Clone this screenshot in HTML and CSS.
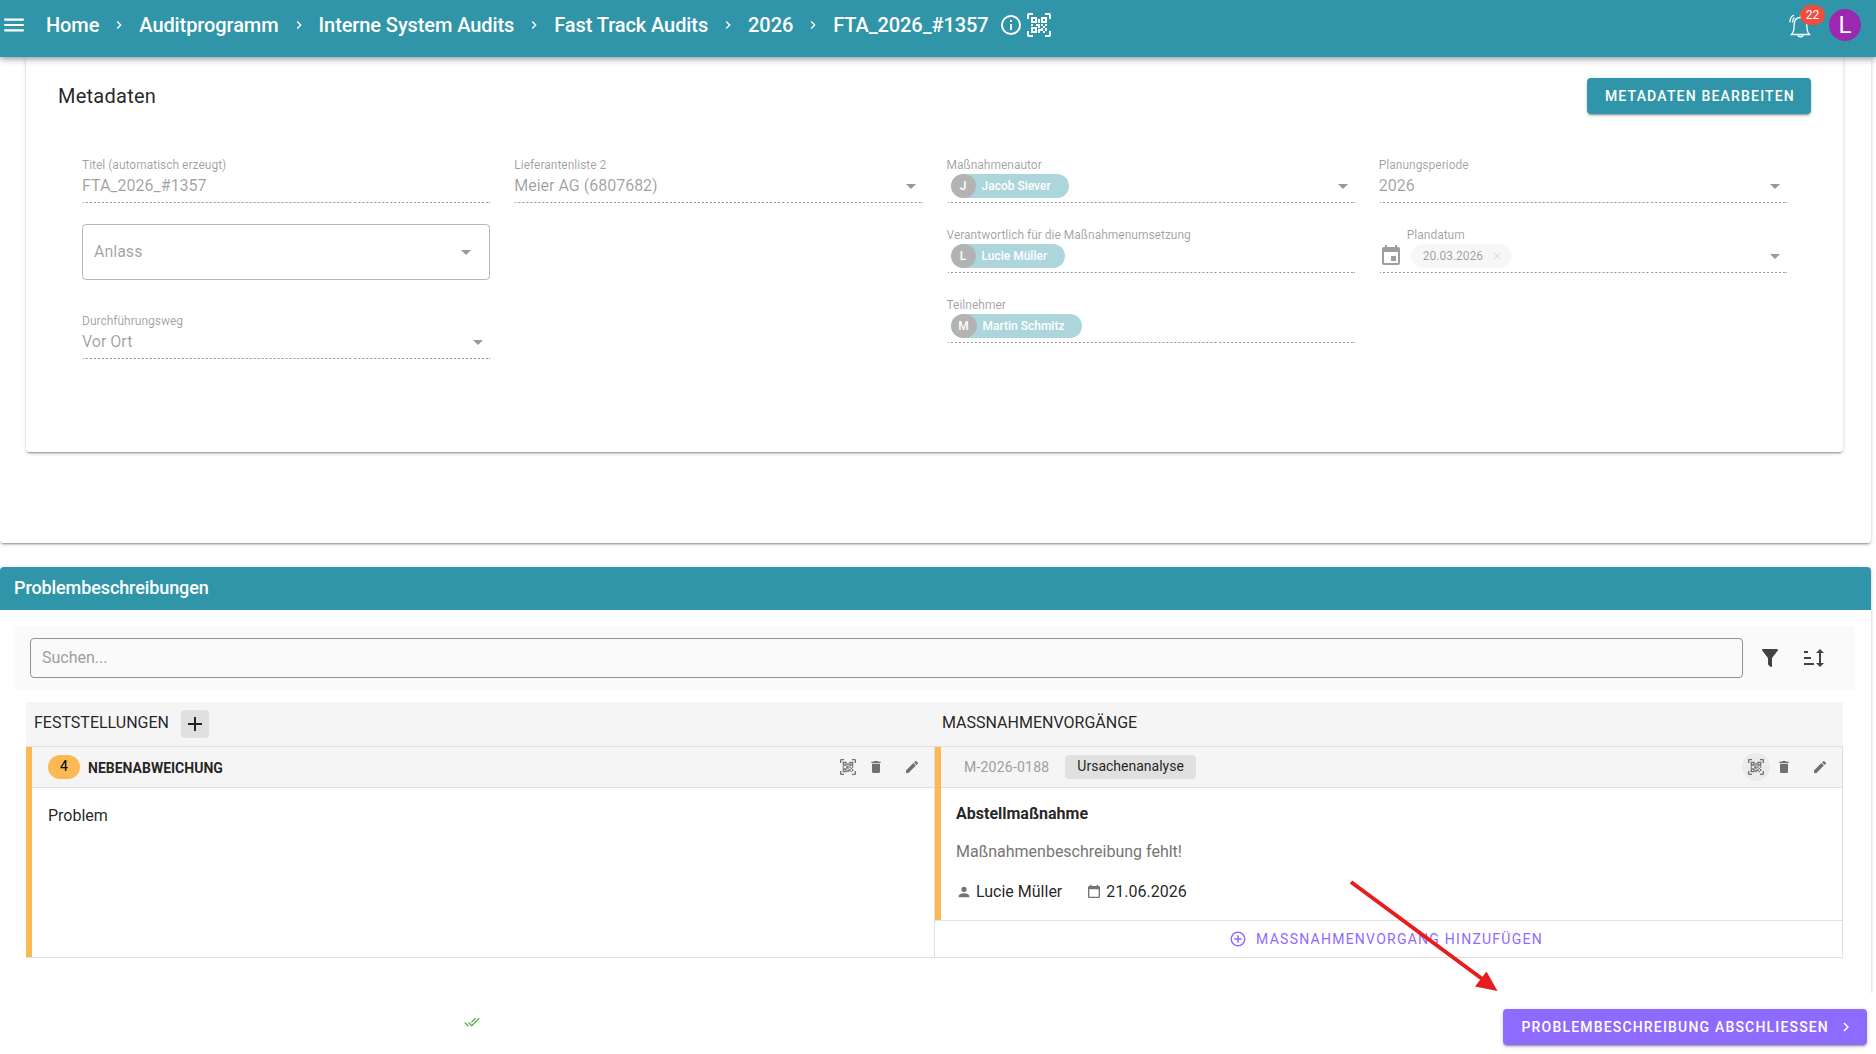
FILE: index.html
```html
<!DOCTYPE html>
<html lang="de">
<head>
    <meta charset="UTF-8">
    <meta name="viewport" content="width=device-width, initial-scale=1.0">
    <link rel="stylesheet" href="styles.css">
    <title>FTA_2026_#1357</title>
</head>
<body>
    <!-- shared icons -->
    <svg class="sprite">
        <symbol id="qr" viewBox="0 0 24 24"><path d="M4,4H10V10H4V4M20,4V10H14V4H20M14,15H16V13H14V11H16V13H18V11H20V13H18V15H20V18H18V20H16V18H13V20H11V16H14V15M16,15V18H18V15H16M4,20V14H10V20H4M6,6V8H8V6H6M16,6V8H18V6H16M6,16V18H8V16H6M4,11H6V13H4V11M9,11H13V15H11V13H9V11M11,6H13V10H11V6M2,2V6H0V2A2,2 0 0,1 2,0H6V2H2M22,0A2,2 0 0,1 24,2V6H22V2H18V0H22M2,18V22H6V24H2A2,2 0 0,1 0,22V18H2M22,22V18H24V22A2,2 0 0,1 22,24H18V22H22Z"/></symbol>
        <symbol id="delete" viewBox="0 0 24 24"><path d="M19,4H15.5L14.5,3H9.5L8.5,4H5V6H19M6,19A2,2 0 0,0 8,21H16A2,2 0 0,0 18,19V7H6V19Z"/></symbol>
        <symbol id="pencil" viewBox="0 0 24 24"><path d="M20.71,7.04C21.1,6.65 21.1,6 20.71,5.63L18.37,3.29C18,2.9 17.35,2.9 16.96,3.29L15.12,5.12L18.87,8.87M3,17.25V21H6.75L17.81,9.93L14.06,6.18L3,17.25Z"/></symbol>
        <symbol id="chevron" viewBox="0 0 24 24"><path d="M8.59,16.58L13.17,12L8.59,7.41L10,6L16,12L10,18L8.59,16.58Z"/></symbol>
    </svg>

    <header class="topbar">
        <svg class="menu" viewBox="0 0 24 24"><path d="M3,6H21V8H3V6M3,11H21V13H3V11M3,16H21V18H3V16Z"/></svg>
        <nav class="breadcrumb">
            <a>Home</a>
            <svg><use href="#chevron"/></svg>
            <a>Auditprogramm</a>
            <svg><use href="#chevron"/></svg>
            <a>Interne System Audits</a>
            <svg><use href="#chevron"/></svg>
            <a>Fast Track Audits</a>
            <svg><use href="#chevron"/></svg>
            <a>2026</a>
            <svg><use href="#chevron"/></svg>
            <a>FTA_2026_#1357</a>
        </nav>
        <svg class="info" viewBox="0 0 24 24"><path d="M11,9H13V7H11M12,20C7.59,20 4,16.41 4,12C4,7.59 7.59,4 12,4C16.41,4 20,7.59 20,12C20,16.41 16.41,20 12,20M12,2A10,10 0 0,0 2,12A10,10 0 0,0 12,22A10,10 0 0,0 22,12A10,10 0 0,0 12,2M11,17H13V11H11V17Z"/></svg>
        <svg class="qr-top"><use href="#qr"/></svg>
        <div class="bell">
            <svg viewBox="0 0 24 26">
                <path d="M3.5 22.5C6.5 19.5 6 17 6.2 12C6.5 7.500 8.500 5.500 12.500 5.500C16.500 5.500 18.500 7.500 18.800 12C19 17 18.500 19.500 21.500 22.500Z"/>
                <path d="M9.800 23C10.300 25.300 14.700 25.300 15.200 23M12.500 5.500V2.500M2 10.500C1.800 7 3 4.500 5.800 3M4.500 10.500C4.500 8 5.200 6.500 6.500 5.500"/>
            </svg>
            <span class="count">22</span>
        </div>
        <div class="avatar">L</div>
    </header>

    <main>
        <section class="panel panel-meta">
            <div class="card">
                <div class="card-head">
                    <h2>Metadaten</h2>
                    <button class="btn">Metadaten bearbeiten</button>
                </div>
                <div class="form">
                    <div class="col">
                        <div class="field">
                            <label>Titel (automatisch erzeugt)</label>
                            <div class="value">FTA_2026_#1357</div>
                        </div>
                        <div class="select">Anlass<i class="caret"></i></div>
                        <div class="field">
                            <label>Durchführungsweg</label>
                            <div class="value">Vor Ort<i class="caret"></i></div>
                        </div>
                    </div>
                    <div class="col">
                        <div class="field">
                            <label>Lieferantenliste 2</label>
                            <div class="value">Meier AG (6807682)<i class="caret"></i></div>
                        </div>
                    </div>
                    <div class="col">
                        <div class="field">
                            <label>Maßnahmenautor</label>
                            <div class="value value-chip"><span class="person"><b>J</b>Jacob Siever</span><i class="caret"></i></div>
                        </div>
                        <div class="field">
                            <label>Verantwortlich für die Maßnahmenumsetzung</label>
                            <div class="value value-chip"><span class="person"><b>L</b>Lucie Müller</span></div>
                        </div>
                        <div class="field">
                            <label>Teilnehmer</label>
                            <div class="value value-chip"><span class="person"><b class="wide">M</b>Martin Schmitz</span></div>
                        </div>
                    </div>
                    <div class="col">
                        <div class="field">
                            <label>Planungsperiode</label>
                            <div class="value">2026<i class="caret"></i></div>
                        </div>
                        <div class="field field-date">
                            <label>Plandatum</label>
                            <div class="value value-chip">
                                <svg class="event" viewBox="0 0 24 24"><path d="M19,19H5V8H19M16,1V3H8V1H6V3H5C3.890,3 3,3.890 3,5V19A2,2 0 0,0 5,21H19A2,2 0 0,0 21,19V5C21,3.890 20.100,3 19,3H18V1M17,12H12V17H17V12Z"/></svg>
                                <span class="date">20.03.2026<svg viewBox="0 0 8 8"><path d="M0.500 0.500L7.500 7.500M7.500 0.500L0.500 7.500"/></svg></span>
                                <i class="caret"></i>
                            </div>
                        </div>
                    </div>
                </div>
            </div>
        </section>

        <section class="panel panel-problems">
            <h3>Problembeschreibungen</h3>
            <div class="search">
                <input type="text" placeholder="Suchen...">
                <svg class="tool" viewBox="0 0 24 24"><path d="M14,12V19.880C14.040,20.180 13.940,20.500 13.710,20.710C13.320,21.100 12.690,21.100 12.300,20.710L10.290,18.700C10.060,18.470 9.960,18.160 10,17.870V12H9.970L4.210,4.620C3.870,4.190 3.950,3.560 4.380,3.220C4.570,3.080 4.780,3 5,3H19C19.220,3 19.430,3.080 19.620,3.220C20.050,3.560 20.130,4.190 19.790,4.620L14.030,12H14Z"/></svg>
                <svg class="tool" viewBox="0 0 24 24"><path d="M2 5H6V7H2ZM2 11H9V13H2ZM2 17H12V19H2ZM18 3L22 7H19V17H22L18 21L14 17H17V7H14Z"/></svg>
            </div>
            <div class="board">
                <div class="board-head">
                    <div>Feststellungen <button class="add"><svg viewBox="0 0 24 24"><path d="M19,13H13V19H11V13H5V11H11V5H13V11H19V13Z"/></svg></button></div>
                    <div>Massnahmenvorgänge</div>
                </div>
                <div class="board-row">
                    <article class="finding">
                        <div class="bar">
                            <span class="number">4</span>
                            <strong>NEBENABWEICHUNG</strong>
                            <div class="actions">
                                <span><svg><use href="#qr"/></svg></span>
                                <span><svg><use href="#delete"/></svg></span>
                                <span><svg><use href="#pencil"/></svg></span>
                            </div>
                        </div>
                        <p>Problem</p>
                    </article>
                    <div class="measures">
                        <article class="measure">
                            <div class="bar">
                                <span class="id">M-2026-0188</span>
                                <span class="tag">Ursachenanalyse</span>
                                <div class="actions">
                                    <span class="active"><svg><use href="#qr"/></svg></span>
                                    <span><svg><use href="#delete"/></svg></span>
                                    <span><svg><use href="#pencil"/></svg></span>
                                </div>
                            </div>
                            <h4>Abstellmaßnahme</h4>
                            <p class="muted">Maßnahmenbeschreibung fehlt!</p>
                            <div class="details">
                                <svg viewBox="0 0 24 24"><path d="M12,4A4,4 0 0,1 16,8A4,4 0 0,1 12,12A4,4 0 0,1 8,8A4,4 0 0,1 12,4M12,14C16.420,14 20,15.790 20,18V20H4V18C4,15.790 7.580,14 12,14Z"/></svg>
                                <span class="owner">Lucie Müller</span>
                                <svg viewBox="0 0 24 24"><path d="M19,19H5V8H19M16,1V3H8V1H6V3H5C3.890,3 3,3.890 3,5V19A2,2 0 0,0 5,21H19A2,2 0 0,0 21,19V5C21,3.890 20.100,3 19,3H18V1"/></svg>
                                <span>21.06.2026</span>
                            </div>
                        </article>
                        <button class="add-measure">
                            <svg viewBox="0 0 24 24"><path d="M12,20C7.590,20 4,16.410 4,12C4,7.590 7.590,4 12,4C16.410,4 20,7.590 20,12C20,16.410 16.410,20 12,20M12,2A10,10 0 0,0 2,12A10,10 0 0,0 12,22A10,10 0 0,0 22,12A10,10 0 0,0 12,2M13,7H11V11H7V13H11V17H13V13H17V11H13V7Z"/></svg>
                            Massnahmenvorgang hinzufügen
                        </button>
                    </div>
                </div>
            </div>
        </section>
    </main>

    <footer>
        <svg class="saved" viewBox="0 0 24 24"><path d="M0.410,13.410L6,19L7.410,17.580L1.830,12M22.240,5.580L11.660,16.170L7.500,12L6.070,13.410L11.660,19L23.660,7M18,7L16.590,5.580L10.240,11.930L11.660,13.340L18,7Z"/></svg>
        <button class="btn btn-finish">Problembeschreibung abschliessen <svg><use href="#chevron"/></svg></button>
    </footer>

    <!-- pointer to the finish button -->
    <svg class="pointer" viewBox="0 0 150 112"><path class="shaft" d="M2 2L136 101"/><path d="M148.500 111L126 106.500L137.500 91.500Z"/></svg>
</body>
</html>
```
FILE: styles.css
```css
* {
    margin: 0;
    padding: 0;
    box-sizing: border-box;
}
body {
    height: 1054px;
    display: flex;
    flex-direction: column;
    overflow: hidden;
    font-family: Roboto, "Liberation Sans", sans-serif;
    font-size: 16px;
    color: rgba(0, 0, 0, 0.87);
    background-color: #fff;
}
svg {
    fill: currentColor;
    flex-shrink: 0;
}
button {
    border: 0;
    font-family: inherit;
}
.sprite {
    display: none;
}

/* top bar */
.topbar {
    height: 57px;
    flex-shrink: 0;
    display: flex;
    align-items: center;
    padding: 0 15px 7px 1px;
    color: #fff;
    background-color: #3095a8;
    box-shadow: 0 2px 4px -1px rgba(0,0,0,.2), 0 4px 5px 0 rgba(0,0,0,.14), 0 1px 10px 0 rgba(0,0,0,.12);
    z-index: 2;
}
.menu {
    width: 26px;
    height: 26px;
}
.breadcrumb {
    display: flex;
    align-items: center;
    margin-left: 19px;
    font-size: 20px;
    font-weight: 500;
    letter-spacing: -0.09px;
    white-space: nowrap;
}
.breadcrumb svg {
    width: 16px;
    height: 16px;
    margin: 0 12px;
}
.info {
    width: 24px;
    height: 24px;
    margin-left: 10px;
}
.qr-top {
    width: 24px;
    height: 24px;
    margin-left: 4px;
}
.bell {
    position: relative;
    width: 24px;
    height: 26px;
    margin-left: auto;
}
.bell svg {
    width: 24px;
    height: 26px;
    fill: none;
    stroke: #fff;
    stroke-width: 1.3;
}
.count {
    position: absolute;
    left: 12px;
    top: -7px;
    width: 25px;
    height: 20px;
    border-radius: 10px;
    background-color: #f04d3f;
    font-size: 12px;
    line-height: 20px;
    text-align: center;
}
.avatar {
    width: 32px;
    height: 32px;
    margin-left: 17px;
    border-radius: 50%;
    background-color: #9c27b0;
    font-size: 24px;
    line-height: 32px;
    text-align: center;
}

/* panels */
main {
    flex: 1;
    overflow: hidden;
    padding-right: 5px;
}
.panel {
    border-radius: 4px;
    background-color: #fff;
    box-shadow: 0 3px 1px -2px rgba(0,0,0,.2), 0 2px 2px 0 rgba(0,0,0,.14), 0 1px 5px 0 rgba(0,0,0,.12);
}
.panel-meta {
    height: 486px;
    padding: 0 28px 0 26px;
}
.card {
    height: 395px;
    padding: 21px 32px;
    border-radius: 0 0 4px 4px;
    box-shadow: 0 3px 1px -2px rgba(0,0,0,.2), 0 2px 2px 0 rgba(0,0,0,.14), 0 1px 5px 0 rgba(0,0,0,.12);
}
.card-head {
    display: flex;
    justify-content: space-between;
    align-items: center;
}
.card-head h2 {
    font-size: 20px;
    font-weight: 400;
    letter-spacing: 0.25px;
}
.btn {
    height: 36px;
    padding: 0 16px 0 18px;
    border-radius: 4px;
    color: #fff;
    background-color: #3095a8;
    font-size: 14px;
    font-weight: 500;
    letter-spacing: 1.18px;
    text-transform: uppercase;
    box-shadow: 0 3px 1px -2px rgba(0,0,0,.2), 0 2px 2px 0 rgba(0,0,0,.14), 0 1px 5px 0 rgba(0,0,0,.12);
}

/* form */
.form {
    display: grid;
    grid-template-columns: repeat(4, 1fr);
    gap: 24px;
    padding: 44px 24px 0;
    color: rgba(0, 0, 0, 0.38);
}
.field {
    margin-bottom: 25px;
}
.field label {
    display: block;
    font-size: 12px;
    line-height: 14px;
    margin-bottom: -2px;
}
.value {
    display: flex;
    align-items: center;
    height: 33px;
    padding-bottom: 2px;
    border-bottom: 1px solid;
    border-image: repeating-linear-gradient(to right, rgba(0,0,0,.42) 0, rgba(0,0,0,.42) 2px, transparent 2px, transparent 4px) 1 repeat;
}
.value-chip {
    padding-bottom: 0;
}
.caret {
    position: relative;
    top: 1px;
    margin-left: auto;
    margin-right: 7px;
    border: 5px solid transparent;
    border-top-color: rgba(0, 0, 0, 0.4);
    border-bottom: 0;
}
.value-chip .caret {
    top: 0;
}
.select {
    display: flex;
    align-items: center;
    height: 56px;
    margin: -4px 0 34px;
    padding: 0 11px 2px;
    border: 1px solid rgba(0, 0, 0, 0.28);
    border-radius: 4px;
}
.person {
    display: flex;
    align-items: center;
    height: 24px;
    margin-left: 4px;
    padding-right: 18px;
    border-radius: 12px;
    overflow: hidden;
    color: #fff;
    background-color: #acd5dc;
    font-size: 12px;
    font-weight: 500;
}
.person b {
    width: 25px;
    height: 24px;
    margin-right: 6px;
    border-radius: 50%;
    background-color: #b3b3b3;
    font-weight: 500;
    line-height: 24px;
    text-align: center;
}
.person .wide {
    width: 26px;
}
.field-date label {
    margin-left: 28px;
}
.event {
    width: 24px;
    height: 24px;
}
.date {
    display: flex;
    align-items: center;
    height: 24px;
    margin-left: 8px;
    padding: 0 10px 0 12px;
    border-radius: 12px;
    background-color: #f7f7f7;
    font-size: 12px;
}
.date svg {
    width: 8px;
    height: 8px;
    margin-left: 10px;
    stroke: #d8d8d8;
}

/* problems */
.panel-problems {
    height: 600px;
    margin-top: 24px;
}
.panel-problems h3 {
    height: 43px;
    padding-left: 14px;
    border-radius: 4px 4px 0 0;
    color: #fff;
    background-color: #3095a8;
    font-size: 18px;
    font-weight: 500;
    letter-spacing: -0.1px;
    line-height: 41px;
}
.search {
    display: flex;
    align-items: center;
    height: 64px;
    margin: 16px 16px 12px 14px;
    padding: 0 29px 0 16px;
    background-color: #fafafa;
}
.search input {
    flex: 1;
    height: 40px;
    margin-right: 15px;
    padding: 0 11px 1px;
    border: 1px solid #929292;
    border-radius: 4px;
    background: none;
    font: inherit;
}
.search input::placeholder {
    color: #9e9e9e;
}
.tool {
    width: 24px;
    height: 24px;
    color: #424242;
}
.tool + .tool {
    margin-left: 20px;
}
.board {
    margin: 0 28px 0 26px;
}
.board-head {
    display: grid;
    grid-template-columns: 908px 1fr;
    height: 45px;
    background-color: #f5f5f5;
    border-bottom: 1px solid #e0e0e0;
    line-height: 20px;
    text-transform: uppercase;
}
.board-head div {
    display: flex;
    align-items: center;
    padding: 0 0 2px 8px;
}
.add {
    width: 28px;
    height: 28px;
    margin: 2px 0 0 12px;
    padding: 2px;
    border-radius: 4px;
    background-color: #e0e0e0;
    color: #222;
}
.add svg {
    display: block;
    width: 24px;
    height: 24px;
}
.board-row {
    display: grid;
    grid-template-columns: 909px 1fr;
    height: 211px;
    border-bottom: 1px solid #e0e0e0;
    border-right: 1px solid #e0e0e0;
}
.finding {
    border-left: 6px solid #fab955;
    border-right: 1px solid #e0e0e0;
}
.measure {
    height: 173px;
    border-left: 6px solid #fab955;
}
.bar {
    display: flex;
    align-items: center;
    height: 41px;
    padding: 0 14px 0 16px;
    background-color: #f5f5f5;
    border-bottom: 1px solid #e0e0e0;
    font-size: 14px;
}
.number {
    width: 32px;
    height: 24px;
    margin-right: 8px;
    border-radius: 12px;
    background-color: #fab955;
    color: #000;
    line-height: 23px;
    text-align: center;
}
.bar strong {
    padding-top: 1px;
    font-weight: 700;
}
.id {
    padding: 0 16px 1px 7px;
    color: #9e9e9e;
    letter-spacing: 0.22px;
}
.tag {
    height: 24px;
    padding: 0 12px;
    border-radius: 4px;
    background-color: #e0e0e0;
    line-height: 23px;
}
.actions {
    display: flex;
    margin-left: auto;
    color: #707070;
}
.actions span {
    display: flex;
    align-items: center;
    justify-content: center;
    width: 28px;
    height: 28px;
    border-radius: 50%;
}
.actions span:last-child {
    width: 16px;
    margin-left: 14px;
}
.actions .active {
    background-color: #ebebeb;
}
.actions svg {
    width: 16px;
    height: 16px;
}
.finding p {
    padding: 18px 16px;
}
.measure h4 {
    padding: 16px 15px 0;
    font-size: 16px;
    font-weight: 700;
}
.measure .muted {
    padding: 19px 15px 0;
    color: #757575;
}
.details {
    display: flex;
    align-items: center;
    padding: 21px 15px 0;
}
.details svg {
    width: 16px;
    height: 16px;
    margin-right: 4px;
    color: #757575;
}
.owner {
    margin-right: 24px;
}
.add-measure {
    display: flex;
    align-items: center;
    justify-content: center;
    width: 100%;
    height: 37px;
    padding-right: 5px;
    border-top: 1px solid #e0e0e0;
    background: none;
    color: #8f6aff;
    font-size: 14px;
    letter-spacing: 1.25px;
    text-transform: uppercase;
}
.add-measure svg {
    width: 18px;
    height: 18px;
    margin-right: 9px;
}

/* footer */
footer {
    display: flex;
    align-items: flex-start;
    justify-content: space-between;
    height: 61px;
    flex-shrink: 0;
    padding: 16px 9px 0 464px;
    background-color: #fff;
}
.saved {
    width: 16px;
    height: 16px;
    margin-top: 5px;
    color: #5fae4e;
}
.btn-finish {
    display: flex;
    align-items: center;
    padding-right: 12px;
    background-color: #8f6aff;
}
.btn-finish svg {
    width: 18px;
    height: 18px;
    margin-left: 8px;
}
.pointer {
    position: absolute;
    left: 1349px;
    top: 880px;
    width: 150px;
    height: 112px;
    color: #e81c1c;
    pointer-events: none;
    z-index: 3;
}
.shaft {
    stroke: currentColor;
    stroke-width: 4;
}
```
